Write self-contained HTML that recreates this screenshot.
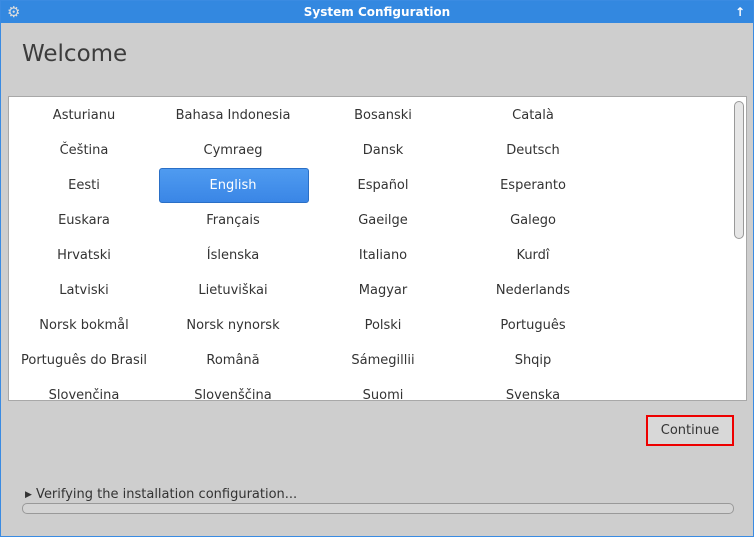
<!DOCTYPE html>
<html><head><style>
body{margin:0;width:754px;height:537px;overflow:hidden;font-family:"DejaVu Sans",sans-serif;}
.win{position:absolute;left:0;top:0;width:752px;height:535px;border:1px solid #3a8be2;background:#cecece;}
.title{position:absolute;left:0;top:0;width:752px;height:22px;background:#3388e0;color:#fff;font-size:12px;font-weight:bold;text-align:center;line-height:23px;}
h1{position:absolute;left:21px;top:40px;margin:0;font-weight:normal;font-size:23px;color:#3c3c3c;}
.list{position:absolute;left:7px;top:95px;width:737px;height:303px;background:#fff;border:1px solid #a8a8a8;overflow:hidden;}
.c{position:absolute;width:150px;text-align:center;font-size:13px;color:#333;line-height:16px;}
.sel{position:absolute;left:150px;top:71px;width:148px;height:33px;background:linear-gradient(#4f9bf0,#3a86e6);border:1px solid #2a6fc6;border-radius:3px;}
.sb{position:absolute;left:725px;top:4px;width:8px;height:136px;border:1px solid #999;border-radius:5px;background:#e6e6e6;}
.btn{position:absolute;left:645px;top:414px;width:84px;height:27px;border:2px solid #e00;background:#d8d8d8;font-size:13px;color:#333;text-align:center;line-height:28px;}
.ver{position:absolute;left:24px;top:486px;font-size:13px;color:#333;}
.bar{position:absolute;left:21px;top:502px;width:710px;height:9px;border:1px solid #999;border-radius:5px;background:#d4d4d4;}
</style></head><body>
<div class="win">
<div class="title"><span style="position:absolute;left:6px;top:0;font-size:15px;color:#ddd">⚙</span>System Configuration<span style="position:absolute;right:8px;top:0;font-size:12px">↑</span></div>
<h1>Welcome</h1>
<div class="list">
<div class="sel"></div>
<div class="sb"></div>
<div id="g"></div>
</div>
<div class="btn">Continue</div>
<div class="ver"><span style="font-size:9px;position:relative;top:-1px">▶</span> Verifying the installation configuration...</div>
<div class="bar"></div>
</div>
<script>
var w=[["Asturianu","Bahasa Indonesia","Bosanski","Català"],["Čeština","Cymraeg","Dansk","Deutsch"],["Eesti","English","Español","Esperanto"],["Euskara","Français","Gaeilge","Galego"],["Hrvatski","Íslenska","Italiano","Kurdî"],["Latviski","Lietuviškai","Magyar","Nederlands"],["Norsk bokmål","Norsk nynorsk","Polski","Português"],["Português do Brasil","Română","Sámegillii","Shqip"],["Slovenčina","Slovenščina","Suomi","Svenska"]];
var h="",xs=[75,224,374,524];
w.forEach(function(r,i){r.forEach(function(t,j){h+='<div class="c" style="left:'+(xs[j]-75)+'px;top:'+(11+35*i)+'px;'+(t=="English"?'color:#fff':'')+'">'+t+'</div>';});});
document.getElementById("g").innerHTML=h;
</script>
</body></html>
